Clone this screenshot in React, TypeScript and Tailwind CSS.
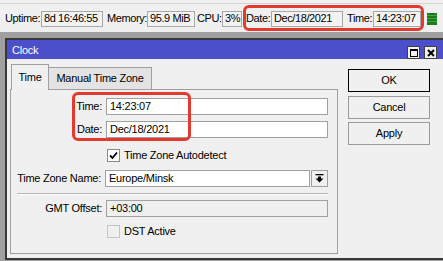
import type { ReactNode } from 'react';

function StatField({ w, children }: { w: string; children: ReactNode }) {
  return (
    <div className={`${w} h-[16px] border border-[#a8a8a8] bg-[#f3f3f3] flex items-center pl-[2px] leading-none whitespace-nowrap overflow-hidden`}>
      {children}
    </div>
  );
}

function StatLabel({ w, children, className = '' }: { w: string; children: ReactNode; className?: string }) {
  return <span className={`${w} shrink-0 whitespace-nowrap ${className}`}>{children}</span>;
}

function Field({ value, w = 'w-[222px]', readOnly = false }: { value: string; w?: string; readOnly?: boolean }) {
  return (
    <div
      className={`${w} h-[17px] border border-[#a0a0a0] flex items-center pl-[3px] leading-none ${readOnly ? 'bg-[#f0f0f0]' : 'bg-white'}`}
    >
      {value}
    </div>
  );
}

function Row({ label, children, className = '' }: { label: string; children: ReactNode; className?: string }) {
  return (
    <div className={`flex items-center ${className}`}>
      <div className="w-[92px] text-right pr-[1px] leading-none whitespace-nowrap">{label}</div>
      <div className="ml-[3px] flex">{children}</div>
    </div>
  );
}

function CheckRow({ label, checked, className = '' }: { label: string; checked: boolean; className?: string }) {
  return (
    <div className={`flex items-center pl-[96px] ${className}`}>
      <div
        className={`w-[13px] h-[13px] border flex items-center justify-center ${checked ? 'border-[#8a8a8a] bg-white' : 'border-[#c4c4c4] bg-[#f0f0f0]'}`}
      >
        {checked && (
          <svg width="9" height="9" viewBox="0 0 9 9">
            <path d="M1 4.5 L3.5 7 L8 1.5" fill="none" stroke="#000" strokeWidth="1.8" />
          </svg>
        )}
      </div>
      <span className="ml-[4px] leading-none">{label}</span>
    </div>
  );
}

function Button({ label, isDefault = false, className = '' }: { label: string; isDefault?: boolean; className?: string }) {
  return (
    <div
      className={`w-[82px] h-[23px] flex items-center justify-center bg-[#f0f0f0] border ${isDefault ? 'border-black' : 'border-[#9a9a9a]'} ${className}`}
    >
      {label}
    </div>
  );
}

export default function App() {
  return (
    <div className="relative w-[443px] h-[261px] overflow-hidden bg-[#a0a0a0] text-[11px] tracking-[-0.25px] text-black font-['Liberation_Sans',Arial,sans-serif]">
      {/* status bar */}
      <div className="h-[32px] bg-[#f0f0f0] pt-[3px]">
        <div className="h-full border-t border-[#d4d4d4] flex items-center pl-[5px] pt-[1px] tracking-[-0.4px]">
          <StatLabel w="w-[36px]">Uptime:</StatLabel>
          <StatField w="w-[62px]">8d 16:46:55</StatField>
          <StatLabel w="w-[40px]" className="ml-[4px]">Memory:</StatLabel>
          <StatField w="w-[48px]">95.9 MiB</StatField>
          <StatLabel w="w-[25px]" className="ml-[2px]">CPU:</StatLabel>
          <StatField w="w-[20px]">3%</StatField>
          <StatLabel w="w-[25px]" className="ml-[4px]">Date:</StatLabel>
          <StatField w="w-[72px]">Dec/18/2021</StatField>
          <StatLabel w="w-[26px]" className="ml-[4px]">Time:</StatLabel>
          <StatField w="w-[48px]">14:23:07</StatField>
          <div className="ml-[6px] w-[10px] h-[12px] bg-[#1f7a1f] flex flex-col justify-evenly">
            <div className="h-[1px] bg-[#3fa83f]" />
            <div className="h-[1px] bg-[#3fa83f]" />
            <div className="h-[1px] bg-[#3fa83f]" />
          </div>
        </div>
      </div>

      {/* dialog window */}
      <div className="ml-[5px] mt-[6px] w-[445px] h-[222px] border-2 border-[#383838] bg-[#f0f0f0] flex flex-col">
        <div className="h-[19px] bg-[#4b4fc9] flex items-center text-white pl-[5px] pr-[11px]">
          <span className="flex-1 pt-[1px]">Clock</span>
          <div className="flex gap-[4px] self-end">
            <div className="w-[13px] h-[13px] bg-[#f0f0f0] border border-[#404040] flex items-center justify-center">
              <div className="w-[8px] h-[8px] border border-black border-t-2" />
            </div>
            <div className="w-[13px] h-[13px] bg-[#f0f0f0] border border-[#404040] flex items-center justify-center">
              <svg width="8" height="8" viewBox="0 0 8 8">
                <path d="M1 1 L7 7 M7 1 L1 7" stroke="#000" strokeWidth="2" />
              </svg>
            </div>
          </div>
        </div>

        <div className="flex flex-1">
          <div className="pl-[3px] pt-[5px]">
            {/* tabs */}
            <div className="flex items-end h-[25px] pl-[1px]">
              <div className="h-[26px] w-[38px] -mb-[1px] relative z-10 bg-[#f0f0f0] border border-b-0 border-[#a0a0a0] flex items-center justify-center pb-[1px]">
                Time
              </div>
              <div className="h-[22px] w-[103px] bg-[#e3e3e3] border border-l-0 border-b-0 border-[#a0a0a0] flex items-center justify-center">
                Manual Time Zone
              </div>
            </div>
            {/* panel */}
            <div className="w-[328px] h-[165px] border border-[#a0a0a0] bg-[#f0f0f0] pt-[8px] pr-[9px]">
              <Row label="Time:"><Field value="14:23:07" /></Row>
              <Row label="Date:" className="mt-[6px]"><Field value="Dec/18/2021" /></Row>
              <CheckRow label="Time Zone Autodetect" checked className="mt-[11px]" />
              <Row label="Time Zone Name:" className="mt-[8px]">
                <Field value="Europe/Minsk" w="w-[205px]" />
                <div className="ml-[1px] w-[17px] h-[17px] bg-[#f0f0f0] border border-[#a0a0a0] flex items-center justify-center">
                  <svg width="9" height="9" viewBox="0 0 9 9">
                    <rect x="0.5" y="0" width="8" height="1.3" fill="#000" />
                    <path d="M3 2.5 H6 V4.5 H8.5 L4.5 8.5 L0.5 4.5 H3 Z" fill="#000" />
                  </svg>
                </div>
              </Row>
              <div className="ml-[6px] mt-[6px] h-[1px] bg-[#b4b4b4] border-b border-white box-content" />
              <Row label="GMT Offset:" className="mt-[5px]"><Field value="+03:00" readOnly /></Row>
              <CheckRow label="DST Active" checked={false} className="mt-[8px]" />
            </div>
          </div>

          <div className="ml-[10px] pt-[10px] flex flex-col">
            <Button label="OK" isDefault className="h-[22px]" />
            <Button label="Cancel" className="mt-[4px]" />
            <Button label="Apply" className="mt-[3px]" />
          </div>
        </div>
      </div>

      {/* annotation outlines */}
      <div className="absolute left-[243px] top-[5px] w-[181px] h-[26px] border-[3px] border-[#e23a2e] rounded-[6px]" />
      <div className="absolute left-[72px] top-[92px] w-[119px] h-[49px] border-[3px] border-[#e23a2e] rounded-[6px]" />
    </div>
  );
}
